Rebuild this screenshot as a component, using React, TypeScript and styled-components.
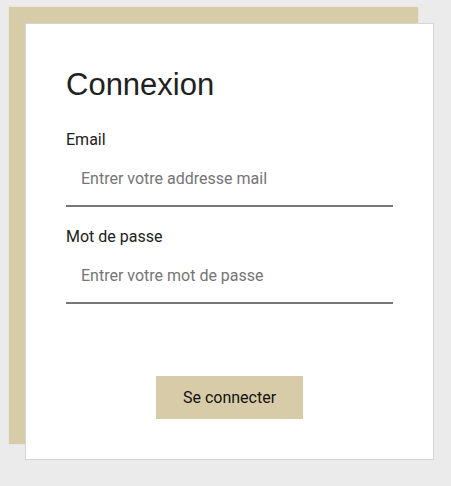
import React from "react";
import styled, { createGlobalStyle } from "styled-components";

const Global = createGlobalStyle`
  html, body {
    margin: 0;
    padding: 0;
    background: #ebebeb;
    font-family: Roboto, "Liberation Sans", Arial, sans-serif;
  }
  * { box-sizing: border-box; }
`;

const Page = styled.div`
  padding: 23px 17px 26px 25px;
  min-height: 486px;
`;

const Card = styled.form`
  width: 409px;
  background: #ffffff;
  border: 1px solid #d6d6d6;
  box-shadow: -16px -16px 1px 0 #d7cca8;
  padding: 43px 40px 40px;
  display: flex;
  flex-direction: column;
`;

const Title = styled.h1`
  margin: 0 0 28px;
  font-family: "Liberation Sans", Arial, sans-serif;
  font-size: 31px;
  font-weight: 400;
  line-height: 35px;
  color: #212121;
`;

const Field = styled.div<{ $last?: boolean }>`
  display: flex;
  flex-direction: column;
  margin-bottom: ${(p) => (p.$last ? "72px" : "20px")};
`;

const Label = styled.label`
  font-size: 16px;
  line-height: 19px;
  color: #212121;
`;

const Input = styled.input`
  width: 100%;
  border: none;
  border-bottom: 2px solid #777777;
  padding: 20px 15px 17px;
  font-family: inherit;
  font-size: 16px;
  line-height: 19px;
  height: 58px;
  color: #212121;
  background: transparent;
  outline: none;
  &::placeholder {
    color: #757575;
  }
`;

const Actions = styled.div`
  display: flex;
  justify-content: center;
`;

const Button = styled.button`
  width: 147px;
  height: 43px;
  border: none;
  background: #d7cca7;
  color: #111111;
  font-family: inherit;
  font-size: 16px;
  cursor: pointer;
`;

export default function App() {
  return (
    <>
      <Global />
      <Page>
        <Card onSubmit={(e) => e.preventDefault()}>
          <Title>Connexion</Title>
          <Field>
            <Label htmlFor="email">Email</Label>
            <Input id="email" type="email" placeholder="Entrer votre addresse mail" />
          </Field>
          <Field $last>
            <Label htmlFor="pwd">Mot de passe</Label>
            <Input id="pwd" type="password" placeholder="Entrer votre mot de passe" />
          </Field>
          <Actions>
            <Button type="submit">Se connecter</Button>
          </Actions>
        </Card>
      </Page>
    </>
  );
}
